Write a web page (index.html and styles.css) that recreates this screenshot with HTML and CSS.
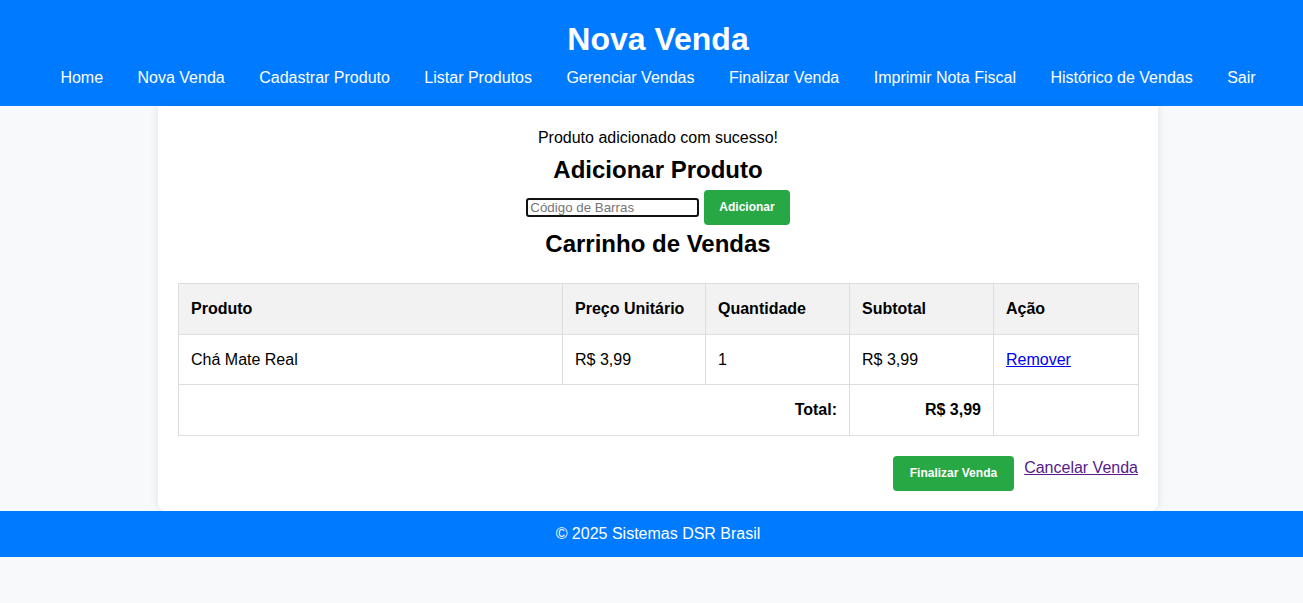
FILE: index.html
```html
<!DOCTYPE html>
<html lang="pt-BR">
<head>
<meta charset="utf-8">
<title>Nova Venda</title>
<link rel="stylesheet" href="styles.css">
</head>
<body>
<header class="site-header">
  <h1 class="site-title">Nova Venda</h1>
  <nav class="site-nav">
    <a href="#">Home</a>
    <a href="#">Nova Venda</a>
    <a href="#">Cadastrar Produto</a>
    <a href="#">Listar Produtos</a>
    <a href="#">Gerenciar Vendas</a>
    <a href="#">Finalizar Venda</a>
    <a href="#">Imprimir Nota Fiscal</a>
    <a href="#">Histórico de Vendas</a>
    <a href="#">Sair</a>
  </nav>
</header>
<main class="main">
  <section class="card">
    <p class="msg">Produto adicionado com sucesso!</p>
    <h2 class="title-add">Adicionar Produto</h2>
    <form class="add-form">
      <input class="barcode" type="text" placeholder="Código de Barras">
      <button class="btn" type="button">Adicionar</button>
    </form>
    <h2 class="title-cart">Carrinho de Vendas</h2>
    <table class="cart">
      <colgroup>
        <col class="c1"><col class="c2"><col class="c3"><col class="c4"><col class="c5">
      </colgroup>
      <thead>
        <tr>
          <th>Produto</th>
          <th>Preço Unitário</th>
          <th>Quantidade</th>
          <th>Subtotal</th>
          <th>Ação</th>
        </tr>
      </thead>
      <tbody>
        <tr>
          <td>Chá Mate Real</td>
          <td>R$ 3,99</td>
          <td>1</td>
          <td>R$ 3,99</td>
          <td><a class="link-remove" href="#">Remover</a></td>
        </tr>
        <tr class="total-row">
          <td colspan="3" class="right">Total:</td>
          <td class="right">R$ 3,99</td>
          <td></td>
        </tr>
      </tbody>
    </table>
    <div class="actions">
      <button class="btn btn-wide" type="button">Finalizar Venda</button>
      <a class="link-cancel" href="#">Cancelar Venda</a>
    </div>
  </section>
</main>
<footer class="site-footer">© 2025 Sistemas DSR Brasil</footer>
</body>
</html>
```

FILE: styles.css
```css
html, body {
  margin: 0;
  padding: 0;
}
body {
  background: #f8f9fa;
  font-family: "Liberation Sans", Arial, sans-serif;
  font-size: 16px;
  color: #000;
}
.site-header {
  background: #007bff;
  color: #fff;
  text-align: center;
  padding: 21px 0 19px 13px;
}
.site-title {
  margin: 0 0 10px;
  font-size: 32px;
  line-height: 37px;
  font-weight: bold;
}
.site-nav {
  line-height: 19px;
}
.site-nav a {
  color: #fff;
  text-decoration: none;
  margin: 0 15px;
}
.main {
  padding-left: 13px;
}
.card {
  width: 1000px;
  box-sizing: border-box;
  margin: 0 auto;
  background: #fff;
  padding: 20px;
  border-radius: 0 0 8px 8px;
  box-shadow: 0 0 10px rgba(0, 0, 0, 0.1);
  text-align: center;
}
.msg {
  margin: 3px 0 0;
  line-height: 18px;
}
.title-add,
.title-cart {
  font-size: 24px;
  line-height: 28px;
  font-weight: bold;
}
.title-add {
  margin: 9px 0 6px;
}
.title-cart {
  margin: 5px 0 25px;
}
.add-form {
  margin: 0;
  display: flex;
  justify-content: center;
  align-items: center;
  gap: 5px;
}
.barcode {
  width: 173px;
  height: 19px;
  box-sizing: border-box;
  border: 2px solid #111;
  border-radius: 3px;
  padding: 0 2px;
  font-family: "Liberation Sans", Arial, sans-serif;
  font-size: 13.33px;
  outline: none;
}
.barcode::placeholder {
  color: #767676;
}
.btn {
  background: #28a745;
  color: #fff;
  border: none;
  border-radius: 4px;
  padding: 10px 15px;
  font-family: "Liberation Sans", Arial, sans-serif;
  font-size: 12px;
  line-height: 15px;
  font-weight: bold;
  cursor: pointer;
}
.btn-wide {
  padding: 10px 17px;
}
.cart {
  width: 960px;
  border-collapse: collapse;
  table-layout: fixed;
  text-align: left;
}
.c1 { width: 384px; }
.c2 { width: 143px; }
.c3 { width: 144px; }
.c4 { width: 144px; }
.c5 { width: 145px; }
.cart th,
.cart td {
  border: 1px solid #ddd;
  padding: 16px 12px;
  line-height: 18px;
  font-size: 16px;
}
.cart th {
  background: #f2f2f2;
  font-weight: bold;
}
.cart tbody tr:first-child td {
  padding-bottom: 15px;
}
.total-row td {
  font-weight: bold;
}
.cart .right {
  text-align: right;
}
.link-remove {
  color: #0000ee;
}
.actions {
  margin-top: 20px;
  display: flex;
  justify-content: flex-end;
  align-items: flex-start;
  gap: 10px;
}
.link-cancel {
  color: #551a8b;
  line-height: 24px;
}
.site-footer {
  background: #007bff;
  color: #fff;
  text-align: center;
  padding: 14px 0 14px 13px;
  line-height: 18px;
}
```
